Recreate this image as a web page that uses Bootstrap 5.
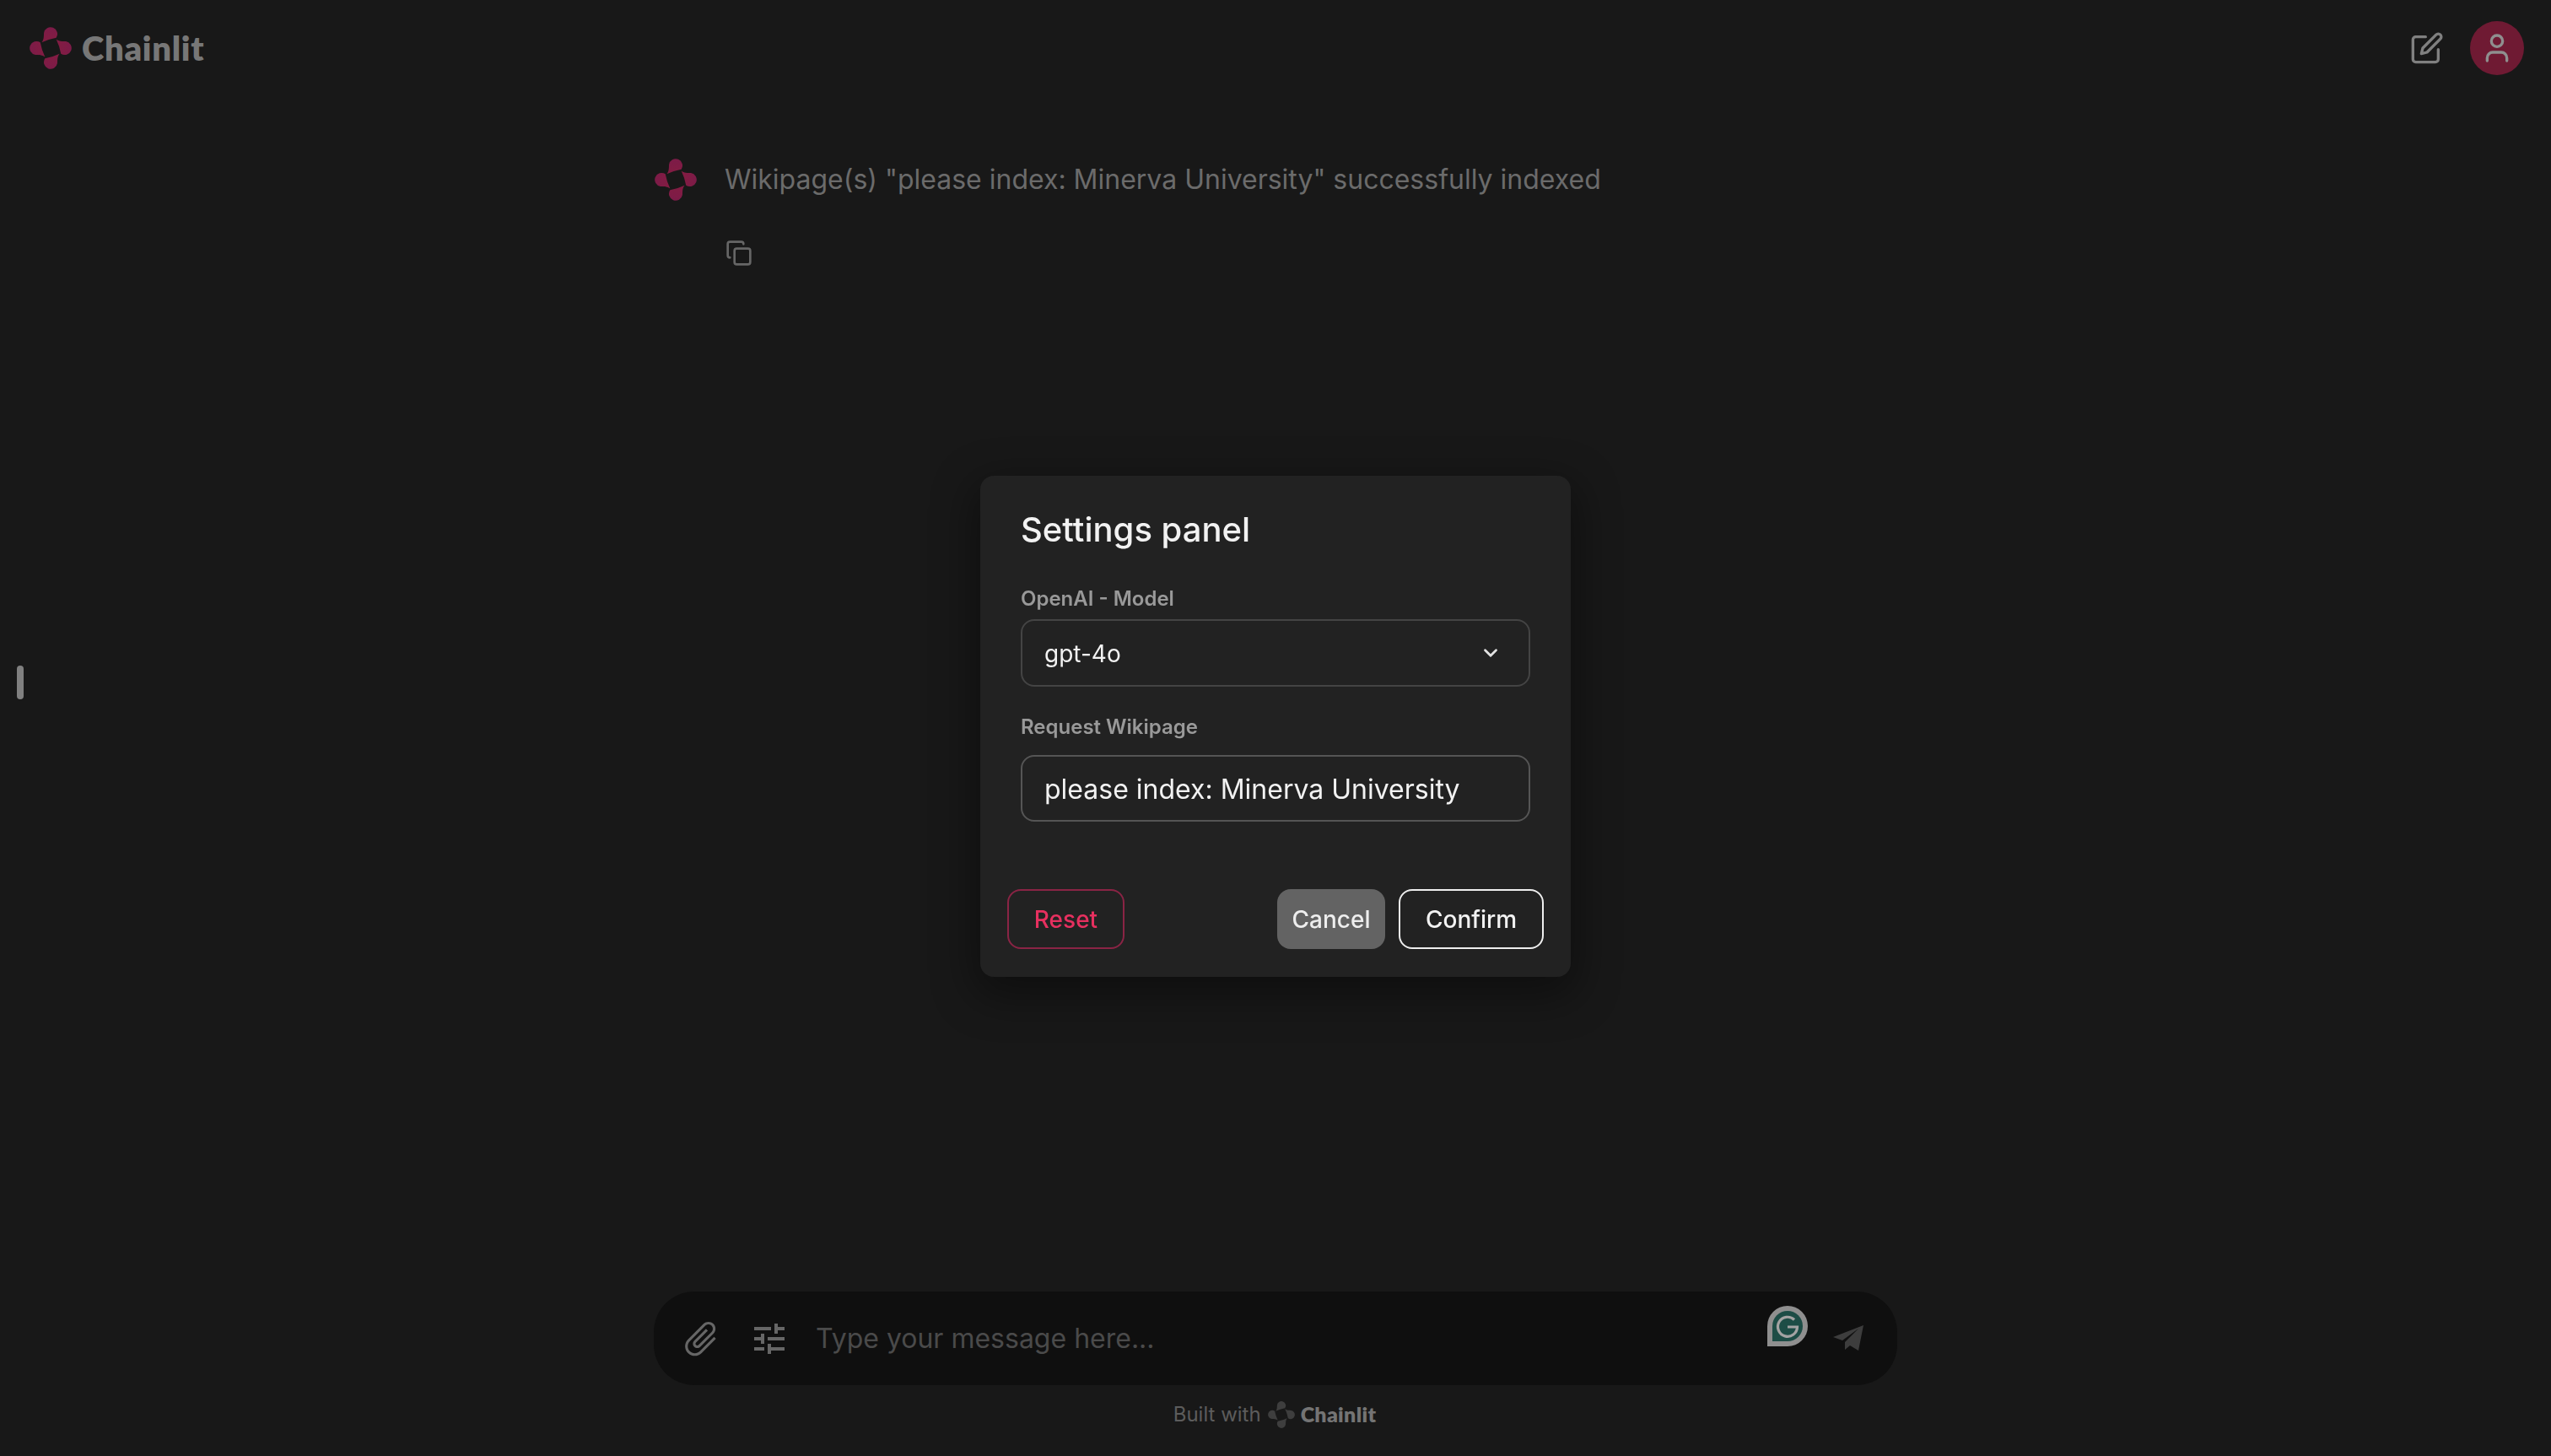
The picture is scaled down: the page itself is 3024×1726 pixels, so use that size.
<!DOCTYPE html>
<html lang="en">
<head>
    <meta charset="utf-8">
    <title>Chainlit</title>
    <link rel="stylesheet" href="https://cdn.jsdelivr.net/npm/bootstrap@5.3.0/dist/css/bootstrap.min.css">
    <style>
        body {
            background: #181818;
            font-family: "Inter", "Liberation Sans", sans-serif;
            overflow: hidden;
        }
        .top-bar { height: 114px; padding: 0 32px 0 35px; }
        .brand-text { font-family: "Lato", sans-serif; font-weight: 800; font-size: 40px; letter-spacing: .7px; color: #777; margin-left: 12px; line-height: 1; }
        .icon-line { fill: none; stroke-width: 2; stroke-linecap: round; stroke-linejoin: round; }
        .avatar-dot { width: 64px; height: 64px; background: #6f1a33; margin-left: 31px; }
        .chat-col { width: 1474px; }
        .msg-row { padding-top: 72px; padding-left: 1px; }
        .msg-text { font-size: 32px; color: #6b6b6b; line-height: 54px; margin-left: 33px; }
        .copy-btn { margin: 44px 0 0 85px; display: block; }
        .side-grip { position: absolute; left: 20px; top: 789px; width: 8px; height: 40px; border-radius: 4px; background: #808080; }
        .composer { height: 111px; background: #0f0f0f; border-radius: 48px; padding-left: 31px; position: relative; }
        .slider-icon { margin-left: 32px; }
        .composer-hint { font-size: 32px; color: #4a4a4a; margin-left: 31px; }
        .grammarly-pin { position: absolute; left: 1320px; top: 17px; }
        .send-plane { position: absolute; left: 1398px; top: 40px; }
        .built-with { height: 84px; font-size: 24px; color: #5c5c5c; padding: 0 2px 15px 0; }
        .built-name { font-family: "Lato", sans-serif; font-weight: 800; font-size: 25px; letter-spacing: .3px; color: #747474; margin-left: 7px; }
        .settings-dlg { max-width: 700px; margin: 0 auto; min-height: calc(100% - 4px); }
        .settings-box { height: 594px; background: #222; border: 0; border-radius: 16px; box-shadow: 0 16px 50px 8px rgba(0, 0, 0, .38); padding: 40px 48px 33px 48px; color: #f2f2f2; }
        .settings-head { font-size: 40px; line-height: 48px; font-weight: 500; margin-bottom: 40px; }
        .field-name { display: block; font-size: 24px; line-height: 36px; font-weight: 600; color: #999; margin-bottom: 6px; }
        .field-name-two { margin: 30px 0 15px; }
        .settings-box .form-select, .settings-box .form-control { height: 80px; padding: 2px 26px 0; background-color: transparent; border: 2px solid #444; border-radius: 16px; color: #f2f2f2; box-shadow: none; }
        .settings-box .form-select { font-size: 28px; background-size: 26px; background-position: right 32px center; background-image: url("data:image/svg+xml,%3csvg xmlns='http://www.w3.org/2000/svg' viewBox='0 0 24 24' fill='none' stroke='%23e0e0e0' stroke-width='2.6' stroke-linecap='round' stroke-linejoin='round'%3e%3cpath d='M6 9l6 6 6-6'/%3e%3c/svg%3e"); }
        .settings-box .form-control { font-size: 32px; border-color: #555; }
        .settings-foot { margin: 80px -16px 0 -16px; }
        .dlg-btn { height: 71px; font-size: 28px; font-weight: 450; border-radius: 16px; display: inline-flex; align-items: center; justify-content: center; }
        .dlg-reset { width: 139px; color: #e6305f; border: 2px solid #8a2445; }
        .dlg-cancel { width: 128px; color: #eee; background: #636363; border: 0; }
        .dlg-confirm { width: 172px; color: #f2f2f2; border: 2px solid #eee; }
    </style>
</head>
<body class="d-flex flex-column vh-100">
<svg width="0" height="0" class="position-absolute">
    <defs>
        <linearGradient id="logoFade" gradientUnits="userSpaceOnUse" x1="0" y1="-26" x2="0" y2="26">
            <stop offset="0" stop-color="#7c1b48"/>
            <stop offset="1" stop-color="#901f38"/>
        </linearGradient>
        <path id="petal" d="M-10.800-6.800C-8-10.200-8.300-14-8.100-18.400A8.200 8.200 0 1 1 6.800-12.500Q-2.500-10.800-10.800-6.800Z"/>
        <g id="logoShape">
            <use href="#petal"/>
            <use href="#petal" transform="rotate(90)"/>
            <use href="#petal" transform="rotate(180)"/>
            <use href="#petal" transform="rotate(270)"/>
        </g>
    </defs>
</svg>

<header class="top-bar d-flex align-items-center flex-shrink-0">
    <svg width="50" height="50" viewBox="-25.500 -25.500 51 51" fill="url(#logoFade)"><use href="#logoShape"/></svg>
    <span class="brand-text">Chainlit</span>
    <svg class="ms-auto icon-line" width="40" height="40" viewBox="0 0 24 24" stroke="#808080">
        <path d="M11 4H4a2 2 0 0 0-2 2v14a2 2 0 0 0 2 2h14a2 2 0 0 0 2-2v-7"/>
        <path d="M18.500 2.500a2.121 2.121 0 0 1 3 3L12 15l-4 1 1-4 9.500-9.500z"/>
    </svg>
    <div class="avatar-dot rounded-circle d-flex align-items-center justify-content-center">
        <svg class="icon-line" width="40" height="40" viewBox="0 0 24 24" stroke="#8f8f8f">
            <path d="M19 21v-2a4 4 0 0 0-4-4H9a4 4 0 0 0-4 4v2"/>
            <circle cx="12" cy="7" r="4"/>
        </svg>
    </div>
</header>

<div class="side-grip"></div>

<main class="chat-col mx-auto flex-grow-1">
    <div class="msg-row d-flex align-items-center">
        <svg width="50" height="50" viewBox="-25.500 -25.500 51 51" fill="url(#logoFade)"><use href="#logoShape"/></svg>
        <span class="msg-text">Wikipage(s) "please index: Minerva University" successfully indexed</span>
    </div>
    <svg class="copy-btn icon-line" width="32" height="32" viewBox="0 0 24 24" stroke="#666">
        <rect x="8" y="8" width="14" height="14" rx="2"/>
        <path d="M4 16c-1.100 0-2-.9-2-2V4c0-1.100.9-2 2-2h10c1.100 0 2 .9 2 2"/>
    </svg>
</main>

<div class="composer chat-col mx-auto d-flex align-items-center flex-shrink-0">
    <svg width="50" height="50" viewBox="0 0 24 24" fill="#666">
        <path transform="rotate(45 12 12)" d="M16.500 6v11.500c0 2.210-1.790 4-4 4s-4-1.790-4-4V5c0-1.380 1.120-2.500 2.500-2.500s2.500 1.120 2.500 2.500v10.500c0 .55-.45 1-1 1s-1-.45-1-1V6H10v9.500c0 1.380 1.120 2.500 2.500 2.500s2.500-1.120 2.500-2.500V5c0-2.210-1.790-4-4-4S7 2.790 7 5v12.500c0 3.040 2.460 5.500 5.500 5.500s5.500-2.460 5.500-5.500V6h-1.500z"/>
    </svg>
    <svg class="slider-icon" width="48" height="48" viewBox="0 0 24 24" fill="#666">
        <path d="M3 17v2h6v-2H3zM3 5v2h10V5H3zm10 16v-2h8v-2h-8v-2h-2v6h2zM7 9v2H3v2h4v2h2V9H7zm14 4v-2H11v2h10zm-6-4h2V7h4V5h-4V3h-2v6z"/>
    </svg>
    <span class="composer-hint">Type your message here...</span>
    <svg class="grammarly-pin" width="48" height="48" viewBox="0 0 48 48">
        <path d="M0 48V24A24 24 0 1 1 24 48Z" fill="#8f8f8f"/>
        <path d="M6 42V24A18 18 0 1 1 24 42Z" fill="#1d4d46"/>
        <path d="M32 16.500A11.500 11.500 0 1 0 35.500 25H24" fill="none" stroke="#a3a3a3" stroke-width="3.200"/>
    </svg>
    <svg class="send-plane" width="36" height="30" viewBox="0 0 36 30" fill="#3d3d3d">
        <path d="M36 0L0 14L11 18L30 4L14 20L14 29L20 24L30 30Z"/>
    </svg>
</div>

<footer class="built-with d-flex align-items-center justify-content-center flex-shrink-0">
    <span>Built with</span>
    <svg class="ms-2" width="32" height="32" viewBox="-25.500 -25.500 51 51" fill="#3e3e3e"><use href="#logoShape"/></svg>
    <span class="built-name">Chainlit</span>
</footer>

<div class="modal d-block" tabindex="-1">
    <div class="modal-dialog modal-dialog-centered settings-dlg">
        <div class="modal-content settings-box">
            <div class="settings-head">Settings panel</div>
            <label class="field-name" for="modelSelect">OpenAI - Model</label>
            <select id="modelSelect" class="form-select">
                <option>gpt-4o</option>
            </select>
            <label class="field-name field-name-two" for="wikiInput">Request Wikipage</label>
            <input id="wikiInput" type="text" class="form-control" value="please index: Minerva University">
            <div class="settings-foot d-flex align-items-center gap-3">
                <button class="btn dlg-btn dlg-reset me-auto">Reset</button>
                <button class="btn dlg-btn dlg-cancel">Cancel</button>
                <button class="btn dlg-btn dlg-confirm">Confirm</button>
            </div>
        </div>
    </div>
</div>

<script src="https://cdn.jsdelivr.net/npm/bootstrap@5.3.0/dist/js/bootstrap.bundle.min.js"></script>
</body>
</html>
